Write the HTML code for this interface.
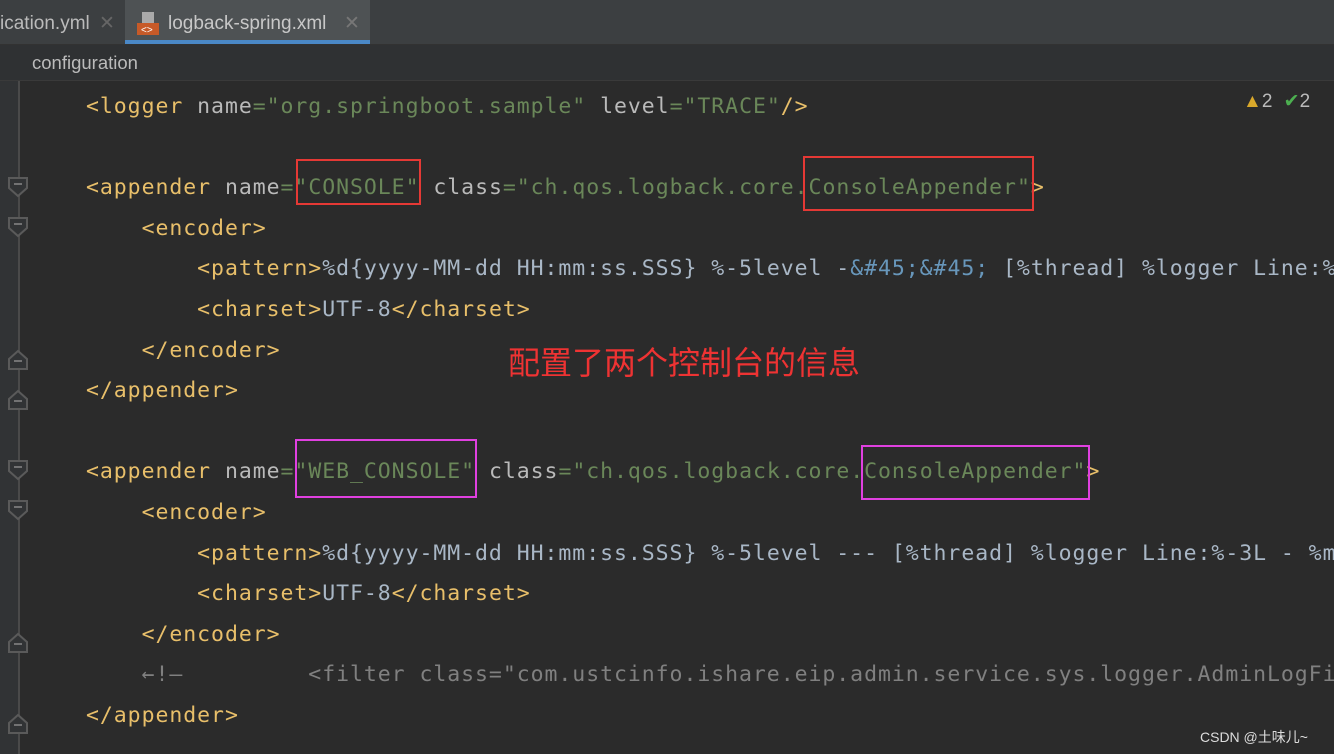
<!DOCTYPE html>
<html><head><meta charset="utf-8"><style>
body{margin:0;width:1334px;height:754px;overflow:hidden;background:#2b2b2b;position:relative;font-family:"Liberation Sans",sans-serif}
.tabs{position:absolute;left:0;top:0;width:1334px;height:44px;background:#3c3f41;border-bottom:1px solid #323232}
.tab{position:absolute;top:0;height:44px;font-size:19px;color:#bbbbbb;line-height:48px}
.bc{position:absolute;top:45px;left:0;width:1334px;height:35px;background:#2f3133;border-bottom:1px solid #3a3a3a;color:#bbbbbb;font-size:18.5px;line-height:36px}
.gut{position:absolute;top:81px;left:0;width:18px;height:673px;background:#313335;border-right:2px solid #4a4a4a}
.code{position:absolute;left:86px;top:87px;font-family:"DejaVu Sans Mono","Liberation Mono",monospace;font-size:21.5px;letter-spacing:0.95px;line-height:40.6px;white-space:pre;color:#a9b7c6}
.t{color:#e8bf6a}.a{color:#bababa}.v{color:#6a8759}.c{color:#808080}
.box{position:absolute;border:2px solid}
</style></head><body>
<div class="tabs">
<div class="tab" style="left:0;width:124px">ication.yml <span style="color:#666;margin-left:4px">✕</span></div>
<div class="tab" style="left:125px;width:245px;background:#4e5254;color:#c8c8c8">
<svg style="position:absolute;left:12px;top:11px" width="24" height="26"><rect x="5" y="1" width="12" height="12" fill="#aaa"/><rect x="0" y="12" width="22" height="12" fill="#c75a28"/><text x="4" y="22" font-size="10" fill="#fff">&lt;&gt;</text></svg>
<span style="position:absolute;left:43px">logback-spring.xml</span><span style="position:absolute;left:219px;color:#777">✕</span>
<div style="position:absolute;left:0;bottom:0;width:245px;height:4px;background:#4a88c7"></div></div>
</div>
<div class="bc"><span style="margin-left:32px">configuration</span></div>
<div class="gut"></div>
<svg style="position:absolute;left:0;top:80px" width="40" height="674">
<g fill="#313335" stroke="#5a5a5a" stroke-width="2">
<path d="M9 98h18v10l-9 8l-9-8z"/><path d="M9 138h18v10l-9 8l-9-8z"/>
<path d="M9 279l9-8l9 8v10h-18z"/><path d="M9 319l9-8l9 8v10h-18z"/>
<path d="M9 381h18v10l-9 8l-9-8z"/><path d="M9 421h18v10l-9 8l-9-8z"/>
<path d="M9 562l9-8l9 8v10h-18z"/><path d="M9 643l9-8l9 8v10h-18z"/>
</g>
<g stroke="#888" stroke-width="1.5"><path d="M14 104h8M14 144h8M14 281h8M14 321h8M14 387h8M14 427h8M14 564h8M14 645h8"/></g>
</svg>
<div class="code"><span class="t">&lt;logger </span><span class="a">name</span><span class="v">="org.springboot.sample"</span> <span class="a">level</span><span class="v">="TRACE"</span><span class="t">/&gt;</span>

<span class="t">&lt;appender </span><span class="a">name</span><span class="v">="CONSOLE"</span> <span class="a">class</span><span class="v">="ch.qos.logback.core.ConsoleAppender"</span><span class="t">&gt;</span>
    <span class="t">&lt;encoder&gt;</span>
        <span class="t">&lt;pattern&gt;</span>%d{yyyy-MM-dd HH:mm:ss.SSS} %-5level -<span style="color:#6897bb">&amp;#45;&amp;#45;</span> [%thread] %logger Line:%
        <span class="t">&lt;charset&gt;</span>UTF-8<span class="t">&lt;/charset&gt;</span>
    <span class="t">&lt;/encoder&gt;</span>
<span class="t">&lt;/appender&gt;</span>

<span class="t">&lt;appender </span><span class="a">name</span><span class="v">="WEB_CONSOLE"</span> <span class="a">class</span><span class="v">="ch.qos.logback.core.ConsoleAppender"</span><span class="t">&gt;</span>
    <span class="t">&lt;encoder&gt;</span>
        <span class="t">&lt;pattern&gt;</span>%d{yyyy-MM-dd HH:mm:ss.SSS} %-5level --- [%thread] %logger Line:%-3L - %m
        <span class="t">&lt;charset&gt;</span>UTF-8<span class="t">&lt;/charset&gt;</span>
    <span class="t">&lt;/encoder&gt;</span>
    <span class="c">←!—         &lt;filter class="com.ustcinfo.ishare.eip.admin.service.sys.logger.AdminLogFi</span>
<span class="t">&lt;/appender&gt;</span></div>
<div class="box" style="left:296px;top:159px;width:121px;height:42px;border-color:#e53935"></div>
<div class="box" style="left:803px;top:156px;width:227px;height:51px;border-color:#e53935"></div>
<div class="box" style="left:295px;top:439px;width:178px;height:55px;border-color:#e040e0"></div>
<div class="box" style="left:861px;top:445px;width:225px;height:51px;border-color:#e040e0"></div>
<div style="position:absolute;left:508px;top:338px;font-family:'Noto Sans CJK SC',sans-serif;font-size:32px;color:#ee3333">配置了两个控制台的信息</div>
<div style="position:absolute;left:1243px;top:90px;font-size:19px;color:#bbb"><span style="color:#d9a82b">▲</span>2 <span style="color:#4caf50;margin-left:6px">✔</span>2</div>
<div style="position:absolute;left:1200px;top:727px;font-family:'Liberation Sans','Noto Sans CJK SC',sans-serif;font-size:14px;color:#ddd">CSDN @土味儿~</div>
</body></html>
